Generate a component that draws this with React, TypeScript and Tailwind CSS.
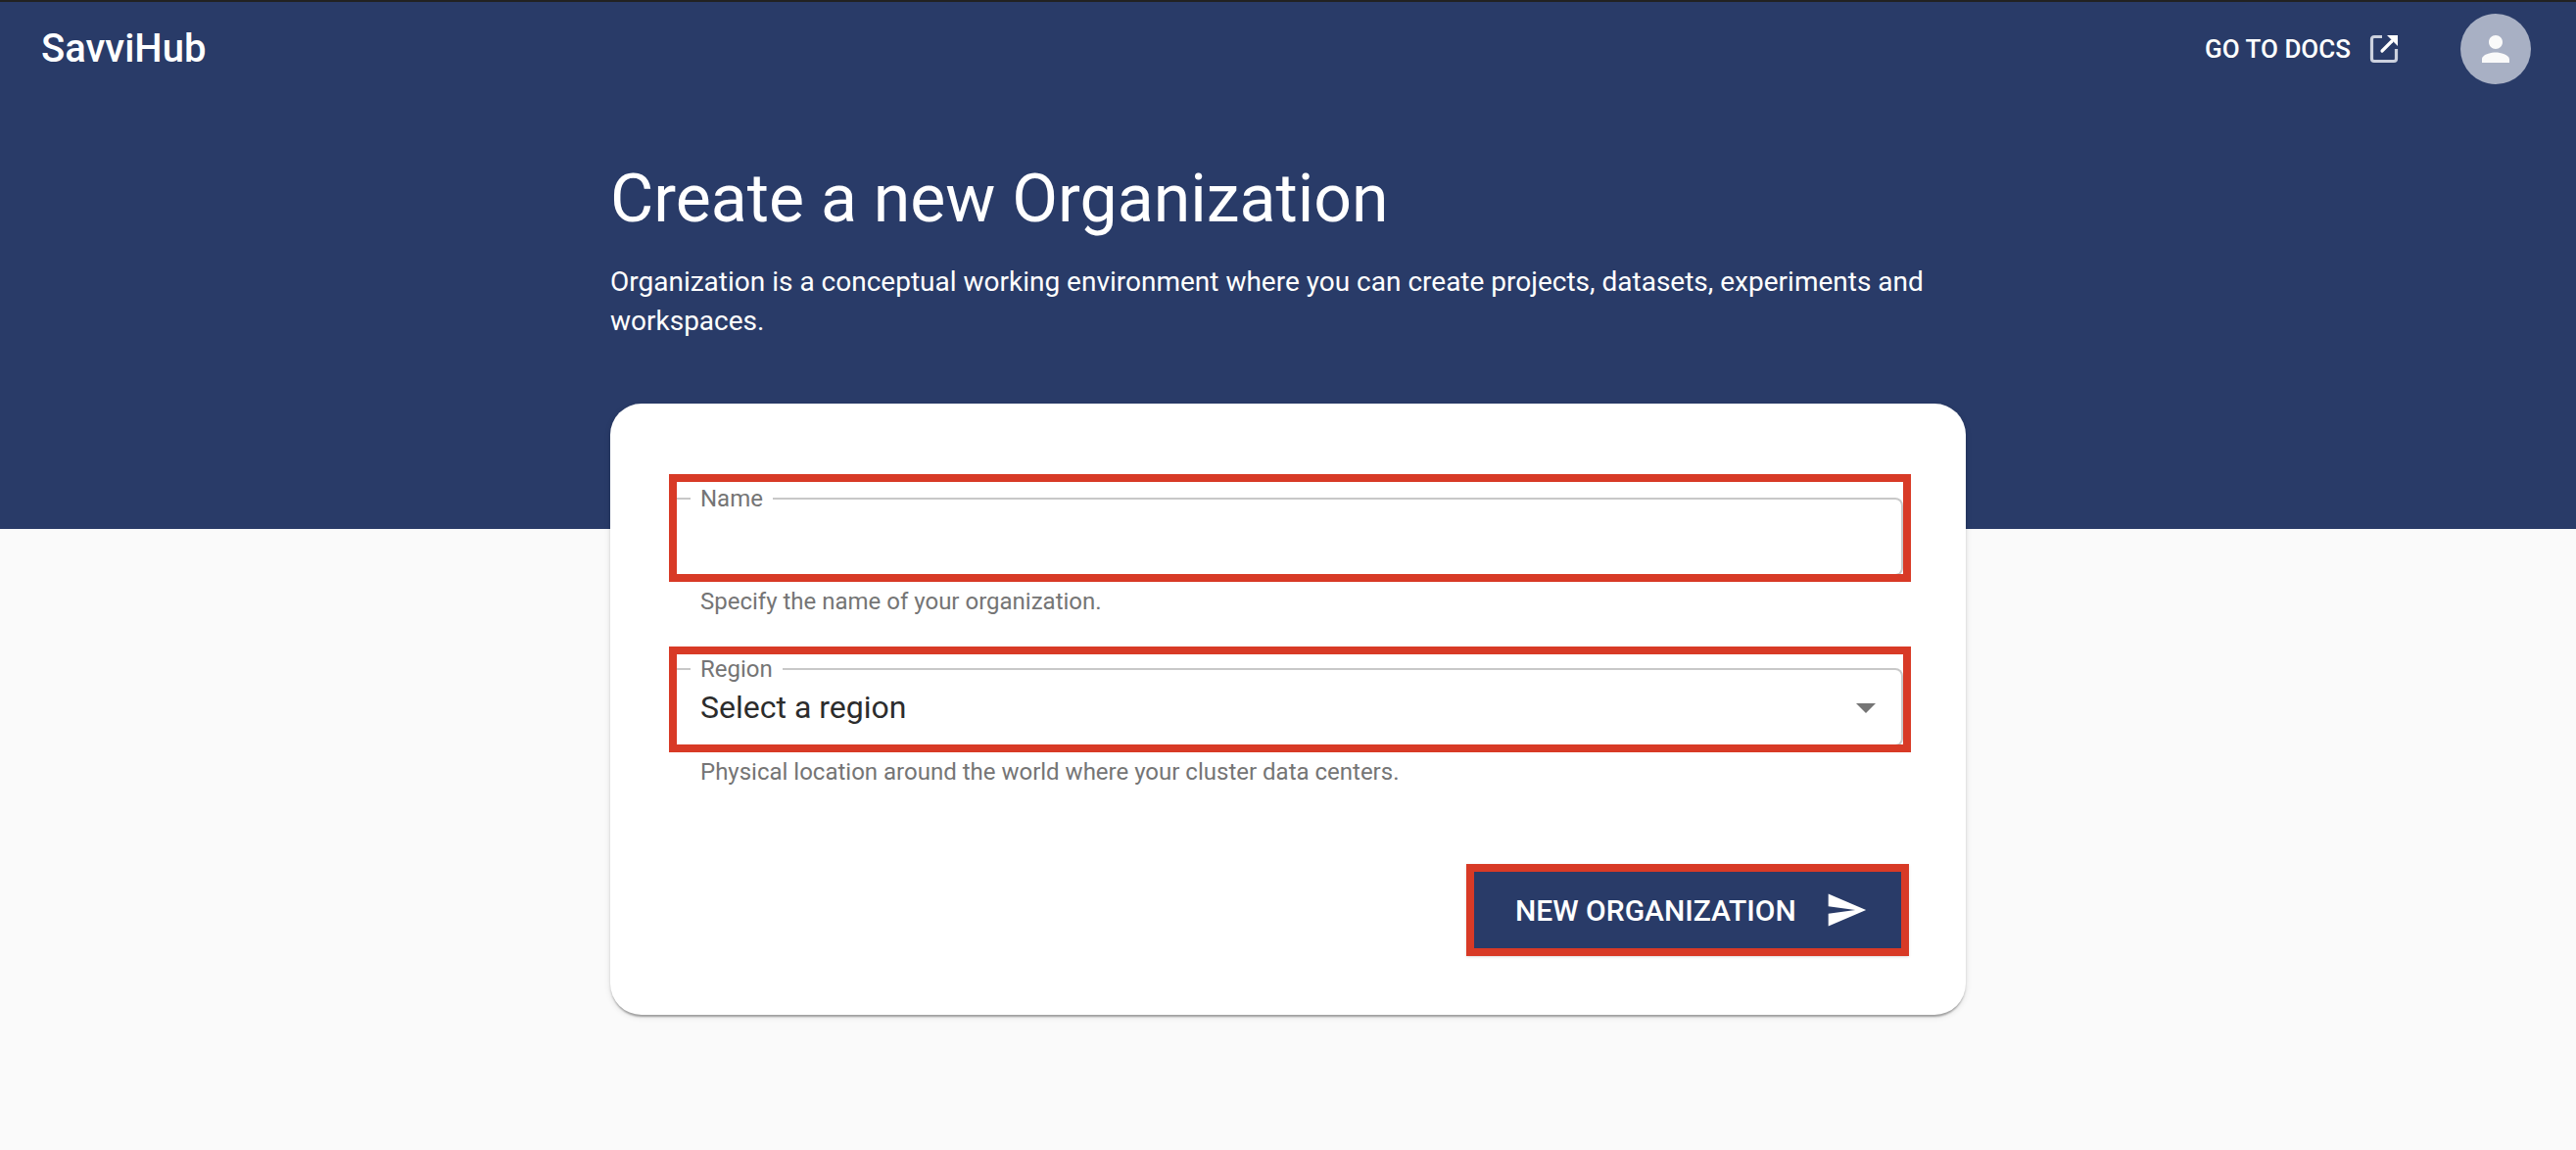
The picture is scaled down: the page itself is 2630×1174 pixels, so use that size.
import React, { useState } from "react";

function OpenInNewIcon() {
  return (
    <svg viewBox="0 0 36 36" className="size-9" fill="none" aria-hidden="true">
      <path
        d="M16 5.5H8A2.5 2.5 0 0 0 5.500 8V28A2.500 2.500 0 0 0 8 30.500H28A2.500 2.500 0 0 0 30.500 28V18"
        stroke="#ccd1de"
        strokeWidth="3.200"
      />
      <path d="M16 20L26 10" stroke="#ffffff" strokeWidth="3.200" strokeLinecap="round" />
      <path d="M21 4H32V15Z" fill="#ffffff" />
    </svg>
  );
}

function PersonIcon() {
  return (
    <svg viewBox="0 0 24 24" className="size-[42px] fill-current" aria-hidden="true">
      <path d="M12 12c2.21 0 4-1.79 4-4s-1.79-4-4-4-4 1.79-4 4 1.79 4 4 4zm0 2c-2.67 0-8 1.34-8 4v2h16v-2c0-2.66-5.33-4-8-4z" />
    </svg>
  );
}

function SendIcon() {
  return (
    <svg viewBox="0 0 24 24" className="size-11 fill-current" aria-hidden="true">
      <path d="M2.01 21L23 12 2.01 3 2 10l15 2-15 2z" />
    </svg>
  );
}

type FieldProps = {
  id: string;
  label: string;
  hint: string;
  boxClass: string;
  children: React.ReactNode;
};

function Field({ id, label, hint, boxClass, children }: FieldProps) {
  return (
    <div>
      <div className={`overflow-hidden border-8 border-[#d83a26] ${boxClass}`}>
        <fieldset className="h-[94px] rounded-r-lg border-2 border-l-0 border-[#c8c8c8]">
          <legend className="ml-3.5 px-2.5 text-2xl leading-[30px] text-[#757575]">
            <label htmlFor={id}>{label}</label>
          </legend>
          {children}
        </fieldset>
      </div>
      <p id={`${id}-hint`} className="pl-8 text-2xl leading-10 text-[#757575]">
        {hint}
      </p>
    </div>
  );
}

export default function App() {
  const [name, setName] = useState("");

  return (
    <div className="min-h-screen bg-[#fafafa] font-['Roboto',sans-serif]">
      <div className="border-t-2 border-[#222222] bg-[#293b68] pb-48 text-white">
        <header className="flex h-24 items-center justify-between pr-[46px] pl-[42px]">
          <a href="#" className="text-[40px] leading-[64px] font-medium">
            SavviHub
          </a>
          <div className="flex items-center gap-[60px]">
            <a href="#docs" className="flex items-center gap-4 text-[26px] leading-[46px] font-medium">
              GO TO DOCS
              <OpenInNewIcon />
            </a>
            <button
              type="button"
              aria-label="Account"
              className="flex size-[72px] items-center justify-center rounded-full bg-[#a8b0c4] text-[#fafafa]"
            >
              <PersonIcon />
            </button>
          </div>
        </header>
        <div className="mx-auto max-w-[1384px] pt-16">
          <h1 className="text-[68px] leading-[82px]">Create a new Organization</h1>
          <p className="mt-6 text-[28px] leading-10">
            Organization is a conceptual working environment where you can create projects, datasets, experiments and
            workspaces.
          </p>
        </div>
      </div>

      <main className="mx-auto -mt-32 max-w-[1384px]">
        <form
          onSubmit={(e) => e.preventDefault()}
          className="rounded-[32px] bg-white pt-[72px] pr-14 pb-[60px] pl-[60px] shadow-[0_4px_2px_-2px_rgba(0,0,0,0.2),0_2px_2px_rgba(0,0,0,0.14),0_2px_6px_rgba(0,0,0,0.12)]"
        >
          <Field id="name" label="Name" hint="Specify the name of your organization." boxClass="h-[110px] pt-0.5">
            <input
              id="name"
              type="text"
              aria-describedby="name-hint"
              value={name}
              onChange={(e) => setName(e.target.value)}
              className="block h-12 w-full bg-transparent px-6 text-[32px] text-[#2c2c2c] outline-none"
            />
          </Field>
          <div className="mt-[26px]">
            <Field
              id="region"
              label="Region"
              hint="Physical location around the world where your cluster data centers."
              boxClass="h-[108px]"
            >
              <div className="relative">
                <select
                  id="region"
                  aria-describedby="region-hint"
                  className="block h-12 w-full appearance-none bg-transparent px-6 pb-0.5 text-[32px] text-[#2c2c2c] outline-none"
                >
                  <option>Select a region</option>
                </select>
                <svg
                  viewBox="0 0 24 24"
                  className="pointer-events-none absolute top-0 right-3 size-12 fill-[#757575]"
                  aria-hidden="true"
                >
                  <path d="M7 10l5 5 5-5z" />
                </svg>
              </div>
            </Field>
          </div>
          <div className="mt-[74px] flex justify-end pr-0.5">
            <button
              type="submit"
              className="flex h-[94px] min-w-[452px] items-center justify-between gap-4 border-8 border-[#d83a26] bg-[#293b68] pr-[34px] pl-[42px] text-[30px] font-medium text-white shadow-sm"
            >
              NEW ORGANIZATION
              <SendIcon />
            </button>
          </div>
        </form>
      </main>
    </div>
  );
}
